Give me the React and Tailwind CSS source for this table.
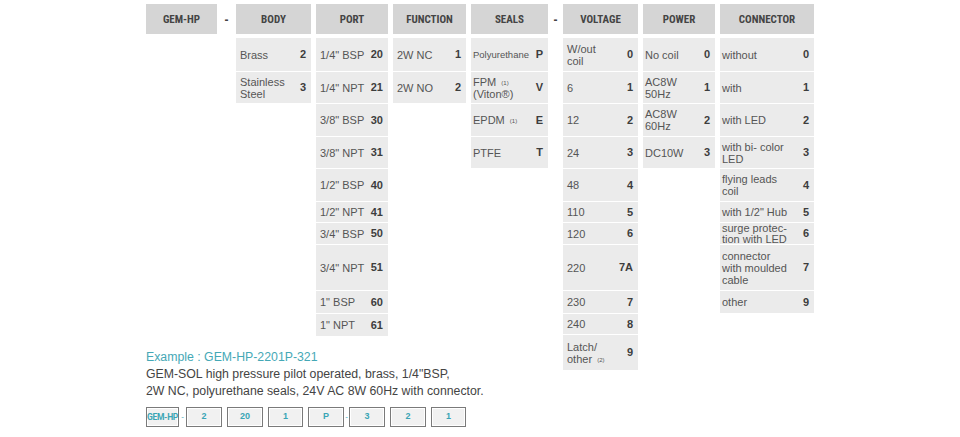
import React from "react";

const ROW_H = [
  "h-[33px]",
  "h-[31px]",
  "h-[32px]",
  "h-[31px]",
  "h-[32px]",
  "h-[20px]",
  "h-[21px]",
  "h-[45px]",
  "h-[22px]",
  "h-[20px]",
  "h-[35px]",
];

const Sup = ({ n }) => (
  <sup className="text-[6px] relative -top-[1px] ml-[2px]">({n})</sup>
);

function Header({ title, w }) {
  return (
    <div
      className={`${w} h-[30px] pt-[2px] bg-[#d5d5d5] flex items-center justify-center text-[11px] font-bold text-[#444] [font-family:'Liberation_Sans_Narrow','Roboto_Condensed','Roboto',sans-serif]`}
    >
      {title}
    </div>
  );
}

function Dash({ w }) {
  return (
    <div
      className={`${w} h-[30px] pt-[2px] flex items-center justify-center text-[12px] font-bold text-[#444]`}
    >
      -
    </div>
  );
}

function Column({ title, w, cells, pl = "pl-[4px]", lastH }) {
  return (
    <div className={`${w} flex flex-col`}>
      <Header title={title} w={w} />
      <div className="mt-[4px] flex flex-col gap-px">
        {cells.map((c, i) => (
          <div
            key={i}
            className={`${i === cells.length - 1 && lastH ? lastH : ROW_H[i]} bg-[#ebebeb] flex items-center justify-between ${pl} pr-[5px]`}
          >
            <div
              className={`${c.small ? "text-[9.5px]" : "text-[11px]"} leading-[12px] text-[#555]`}
            >
              {c.label}
            </div>
            <div className="text-[11px] font-bold text-[#3d3d3d] shrink-0">
              {c.code}
            </div>
          </div>
        ))}
      </div>
    </div>
  );
}

const br = (a, b) => (
  <>
    {a}
    <br />
    {b}
  </>
);

const body = [
  { label: "Brass", code: "2" },
  { label: br("Stainless", "Steel"), code: "3" },
];

const port = [
  { label: "1/4\" BSP", code: "20" },
  { label: "1/4\" NPT", code: "21" },
  { label: "3/8\" BSP", code: "30" },
  { label: "3/8\" NPT", code: "31" },
  { label: "1/2\" BSP", code: "40" },
  { label: "1/2\" NPT", code: "41" },
  { label: "3/4\" BSP", code: "50" },
  { label: "3/4\" NPT", code: "51" },
  { label: "1\" BSP", code: "60" },
  { label: "1\" NPT", code: "61" },
];

const func = [
  { label: "2W NC", code: "1" },
  { label: "2W NO", code: "2" },
];

const seals = [
  { label: "Polyurethane", code: "P", small: true },
  {
    label: (
      <>
        FPM <Sup n="1" />
        <br />
        (Viton®)
      </>
    ),
    code: "V",
  },
  {
    label: (
      <>
        EPDM <Sup n="1" />
      </>
    ),
    code: "E",
  },
  { label: "PTFE", code: "T" },
];

const voltage = [
  { label: br("W/out", "coil"), code: "0" },
  { label: "6", code: "1" },
  { label: "12", code: "2" },
  { label: "24", code: "3" },
  { label: "48", code: "4" },
  { label: "110", code: "5" },
  { label: "120", code: "6" },
  { label: "220", code: "7A" },
  { label: "230", code: "7" },
  { label: "240", code: "8" },
  {
    label: (
      <>
        Latch/
        <br />
        other <Sup n="2" />
      </>
    ),
    code: "9",
  },
];

const power = [
  { label: "No coil", code: "0" },
  { label: br("AC8W", "50Hz"), code: "1" },
  { label: br("AC8W", "60Hz"), code: "2" },
  { label: "DC10W", code: "3" },
];

const connector = [
  { label: "without", code: "0" },
  { label: "with", code: "1" },
  { label: "with LED", code: "2" },
  { label: br("with bi- color", "LED"), code: "3" },
  { label: br("flying leads", "coil"), code: "4" },
  { label: "with 1/2\" Hub", code: "5" },
  {
    label: (
      <span className="block leading-[11px]">
        surge protec-
        <br />
        tion with LED
      </span>
    ),
    code: "6",
  },
  {
    label: (
      <>
        connector
        <br />
        with moulded
        <br />
        cable
      </>
    ),
    code: "7",
  },
  { label: "other", code: "9" },
];

function Box({ children, w = "w-[36px]", mr = "" }) {
  return (
    <div
      className={`${w} ${mr} h-[20px] border border-[#7a7a7a] bg-[#f1f1f1] shadow-[inset_0_0_0_1px_#ffffff] flex items-center justify-center text-[9px] font-bold text-[#3aa5b5] whitespace-nowrap overflow-hidden`}
    >
      {children}
    </div>
  );
}

function SmallDash({ w }) {
  return (
    <div className={`${w} h-[20px] flex items-center justify-center text-[8px] text-[#3aa5b5]`}>
      -
    </div>
  );
}

export default function App() {
  return (
    <div className="w-[960px] h-[437px] bg-white overflow-hidden [font-family:'Liberation_Sans',Arial,sans-serif]">
      <div className="flex items-start gap-[5px] pl-[146px] pt-[4px]">
        <div className="flex flex-col">
          <div className="flex items-start gap-[5px]">
            <Header title="GEM-HP" w="w-[71px]" />
            <Dash w="w-[9px]" />
            <Column title="BODY" w="w-[75px]" cells={body} />
            <Column title="PORT" w="w-[72px]" cells={port} lastH="h-[22px]" />
            <Column title="FUNCTION" w="w-[73px]" cells={func} />
            <Column title="SEALS" w="w-[77px]" cells={seals} pl="pl-[2px]" />
          </div>
          <div className="mt-[13px]">
            <div className="text-[12.3px] leading-[17px] text-[#45a8b6]">
              Example : GEM-HP-2201P-321
            </div>
            <div className="text-[12.3px] leading-[17px] text-[#444]">
              GEM-SOL high pressure pilot operated, brass, 1/4"BSP,
              <br />
              2W NC, polyurethane seals, 24V AC 8W 60Hz with connector.
            </div>
            <div className="mt-[7px] flex items-center">
              <Box w="w-[33px]">
                <span className="whitespace-nowrap text-[8.5px] [font-family:'Liberation_Sans_Narrow','Roboto',sans-serif] tracking-[-0.3px]">
                  GEM-HP
                </span>
              </Box>
              <SmallDash w="w-[7px]" />
              <Box mr="mr-[5px]">2</Box>
              <Box mr="mr-[5px]">20</Box>
              <Box w="w-[35px]" mr="mr-[5px]">1</Box>
              <Box>P</Box>
              <SmallDash w="w-[5px]" />
              <Box mr="mr-[5px]">3</Box>
              <Box mr="mr-[5px]">2</Box>
              <Box w="w-[35px]">1</Box>
            </div>
          </div>
        </div>
        <Dash w="w-[5px]" />
        <Column title="VOLTAGE" w="w-[75px]" cells={voltage} />
        <Column title="POWER" w="w-[72px]" cells={power} pl="pl-[2px]" />
        <Column title="CONNECTOR" w="w-[94px]" cells={connector} pl="pl-[2px]" />
      </div>
    </div>
  );
}
